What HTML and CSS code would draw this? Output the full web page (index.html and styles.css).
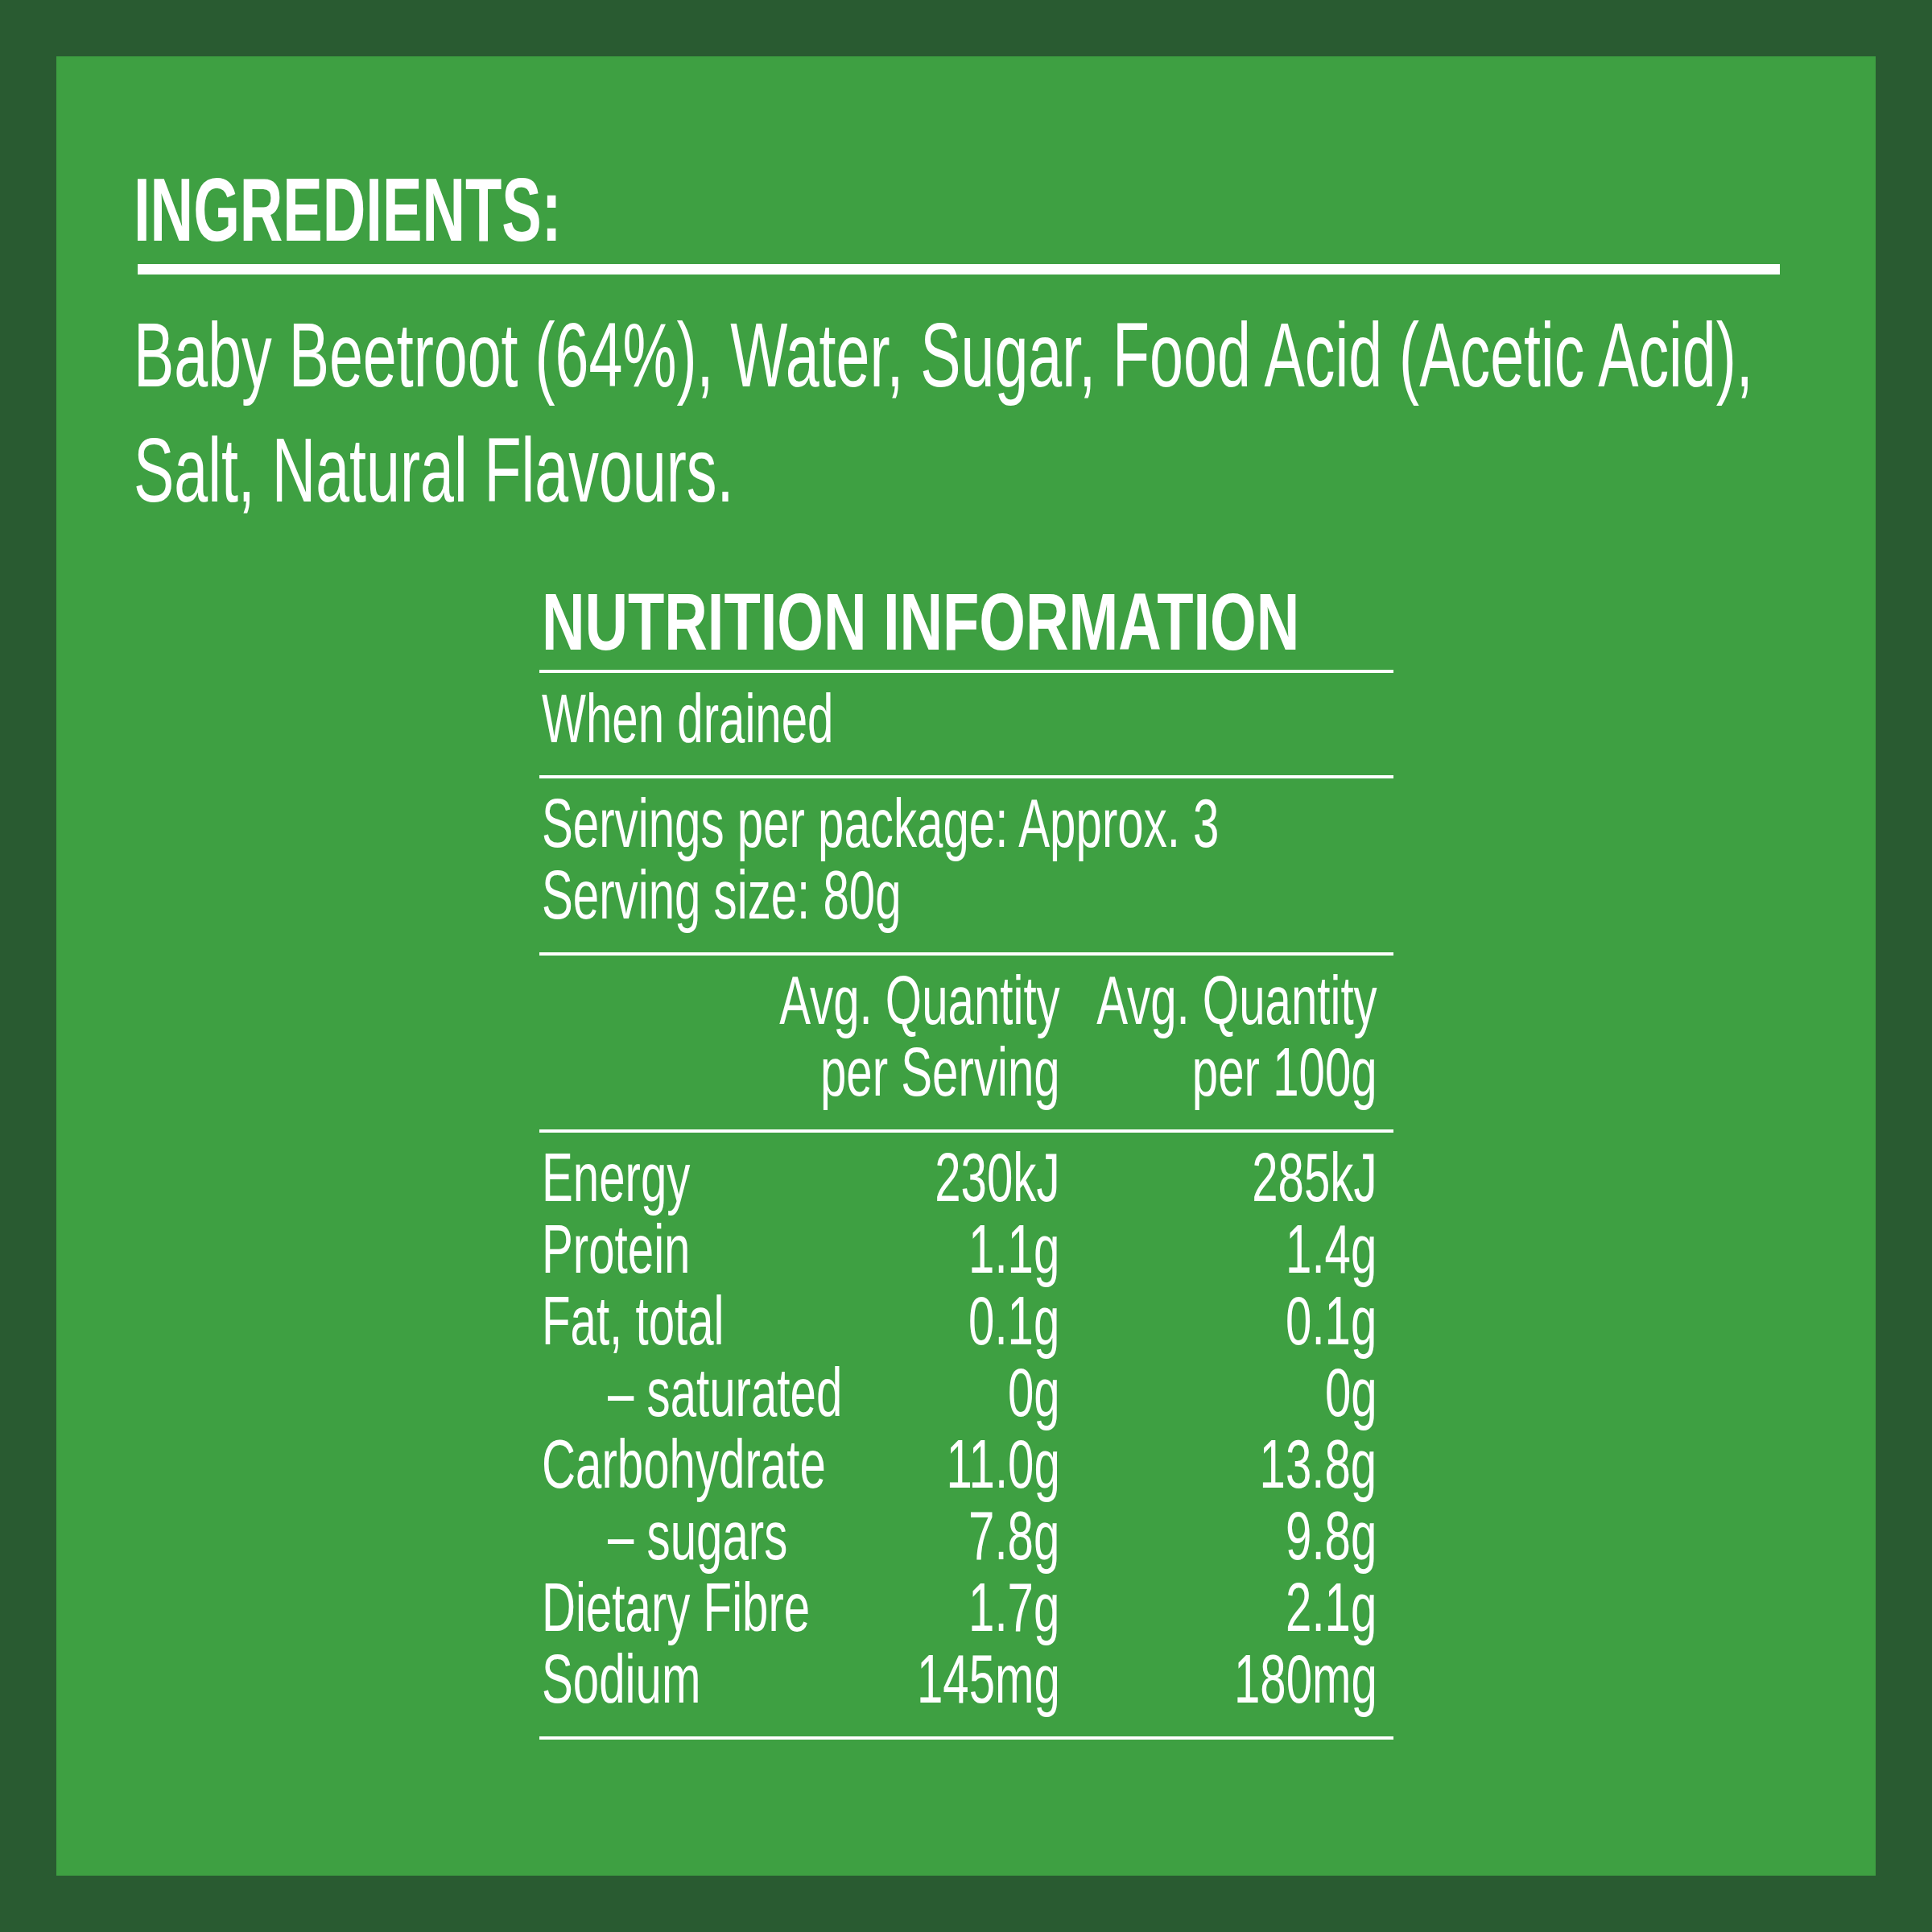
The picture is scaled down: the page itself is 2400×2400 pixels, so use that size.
FILE: index.html
```html
<!DOCTYPE html>
<html lang="en">
<head>
<meta charset="utf-8">
<title>Baby Beetroot – Ingredients &amp; Nutrition</title>
<link rel="stylesheet" href="styles.css">
</head>
<body>
<div class="frame">
  <main class="panel">
    <section class="ingredients">
      <h1 class="ing-title">INGREDIENTS:</h1>
      <div class="ing-rule"></div>
      <p class="ing-text">Baby Beetroot (64%), Water, Sugar, Food Acid (Acetic Acid),<br>Salt, Natural Flavours.</p>
    </section>

    <section class="nip">
      <div class="nip-title-wrap"><h2 class="nip-title">NUTRITION INFORMATION</h2></div>

      <div class="nip-sec nip-note"><p class="cx">When drained</p></div>

      <div class="nip-sec"><p class="cx">Servings per package: Approx. 3<br>Serving size: 80g</p></div>

      <div class="nip-sec nip-grid">
        <div class="cell"></div>
        <div class="cell num"><p class="cx">Avg. Quantity<br>per Serving</p></div>
        <div class="cell num"><p class="cx">Avg. Quantity<br>per 100g</p></div>
      </div>

      <div class="nip-sec nip-grid">
        <div class="cell"><p class="cx">Energy</p></div>
        <div class="cell num"><p class="cx">230kJ</p></div>
        <div class="cell num"><p class="cx">285kJ</p></div>

        <div class="cell"><p class="cx">Protein</p></div>
        <div class="cell num"><p class="cx">1.1g</p></div>
        <div class="cell num"><p class="cx">1.4g</p></div>

        <div class="cell"><p class="cx">Fat, total</p></div>
        <div class="cell num"><p class="cx">0.1g</p></div>
        <div class="cell num"><p class="cx">0.1g</p></div>

        <div class="cell sub"><p class="cx">– saturated</p></div>
        <div class="cell num"><p class="cx">0g</p></div>
        <div class="cell num"><p class="cx">0g</p></div>

        <div class="cell"><p class="cx">Carbohydrate</p></div>
        <div class="cell num"><p class="cx">11.0g</p></div>
        <div class="cell num"><p class="cx">13.8g</p></div>

        <div class="cell sub"><p class="cx">– sugars</p></div>
        <div class="cell num"><p class="cx">7.8g</p></div>
        <div class="cell num"><p class="cx">9.8g</p></div>

        <div class="cell"><p class="cx">Dietary Fibre</p></div>
        <div class="cell num"><p class="cx">1.7g</p></div>
        <div class="cell num"><p class="cx">2.1g</p></div>

        <div class="cell"><p class="cx">Sodium</p></div>
        <div class="cell num"><p class="cx">145mg</p></div>
        <div class="cell num"><p class="cx">180mg</p></div>
      </div>
    </section>
  </main>
</div>
</body>
</html>
```

FILE: styles.css
```css
html, body {
  margin: 0;
  padding: 0;
}

.frame {
  width: 2400px;
  height: 2400px;
  box-sizing: border-box;
  padding: 70px;
  background: #295b31;
  overflow: hidden;
  font-family: "Liberation Sans", Arial, sans-serif;
  color: #ffffff;
}

.panel {
  height: 100%;
  box-sizing: border-box;
  background: #3ea042;
  padding: 135px 96px 0;
}

/* Ingredients */
.ing-title {
  margin: 0;
  font-size: 112px;
  line-height: 112px;
  font-weight: 700;
  white-space: nowrap;
  transform: scaleX(0.662);
  transform-origin: 0 0;
}

.ing-rule {
  margin: 11px 0 0 5px;
  width: 2040px;
  height: 13px;
  background: #ffffff;
}

.ing-text {
  margin: 28px 0 0;
  font-size: 114px;
  line-height: 143px;
  font-weight: 400;
  white-space: nowrap;
  transform: scaleX(0.661);
  transform-origin: 0 0;
}

/* Nutrition information panel */
.nip {
  width: 1061px;
  margin: 67px auto 0;
}

.nip-title-wrap {
  padding: 0 0 10px 3px;
  border-bottom: 4px solid #ffffff;
}

.nip-title {
  margin: 0;
  font-size: 100px;
  line-height: 100px;
  font-weight: 700;
  white-space: nowrap;
  transform: scaleX(0.741);
  transform-origin: 0 0;
}

.nip-sec {
  padding: 11px 20px 27px 3px;
  border-bottom: 4px solid #ffffff;
  font-size: 86px;
  line-height: 89px;
}

.nip-note {
  padding-top: 12px;
  padding-bottom: 26px;
}

.cx {
  margin: 0;
  white-space: nowrap;
  transform: scaleX(0.677);
  transform-origin: 0 0;
}

.nip-grid {
  display: grid;
  grid-template-columns: 250px 394px 394px;
}

.cell {
  min-width: 0;
}

.num {
  display: flex;
  justify-content: flex-end;
}

.num .cx {
  flex: none;
  text-align: right;
  transform-origin: 100% 0;
}

.sub {
  padding-left: 82px;
}
```
